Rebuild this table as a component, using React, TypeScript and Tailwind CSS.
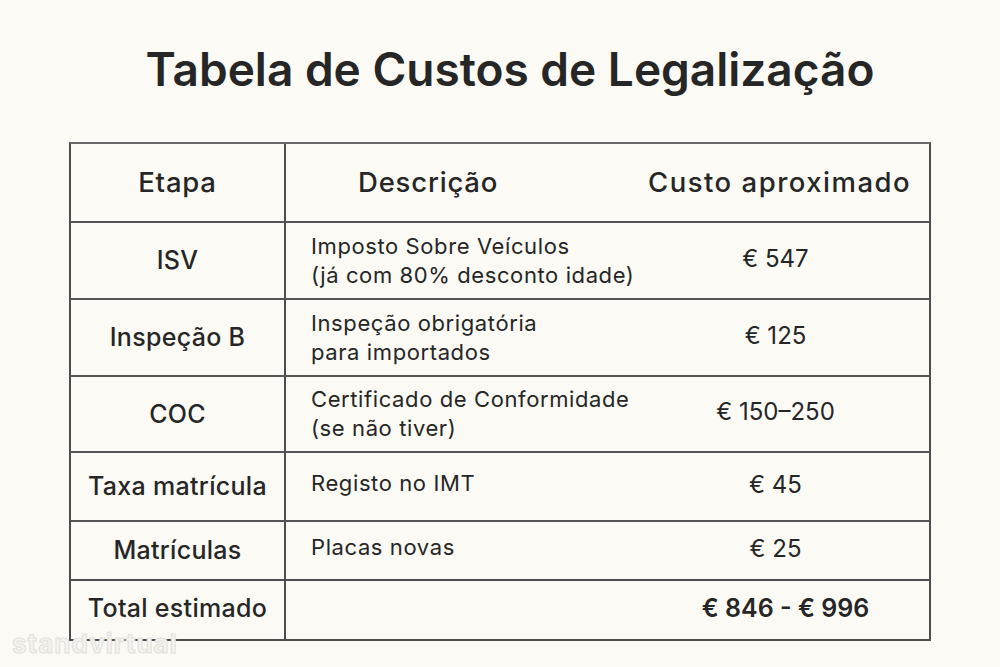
import React from "react";

const rows = [
  { etapa: "ISV", desc: ["Imposto Sobre Veículos", "(já com 80% desconto idade)"], cost: "€ 547", h: "h-[77px]" },
  { etapa: "Inspeção B", desc: ["Inspeção obrigatória", "para importados"], cost: "€ 125", h: "h-[77px]" },
  { etapa: "COC", desc: ["Certificado de Conformidade", "(se não tiver)"], cost: "€ 150–250", h: "h-[76px]" },
  { etapa: "Taxa matrícula", desc: ["Registo no IMT"], cost: "€ 45", h: "h-[69px]" },
  { etapa: "Matrículas", desc: ["Placas novas"], cost: "€ 25", h: "h-[59px]" },
];

export default function App() {
  return (
    <div
      className="relative w-[1000px] h-[667px] bg-[#fbfaf5] text-[#262626] overflow-hidden"
      style={{ fontFamily: "Inter, 'Noto Sans', sans-serif" }}
    >
      <div className="flex justify-center pt-[37px] h-[142px]">
        <h1 className="text-[46px] font-semibold tracking-[0px] leading-[64px] ml-[20px]">
          Tabela de Custos de Legalização
        </h1>
      </div>
      <div className="ml-[69px] w-[862px] border-2 border-[#4d4d4d] border-t-[#6a6a6a]">
        <div className="grid grid-cols-[215px_minmax(0,1fr)_307px] h-[77px] items-center">
          <div className="h-full flex items-center justify-center border-r-2 border-[#4d4d4d] text-[27.5px] tracking-[0.8px] font-medium">
            Etapa
          </div>
          <div className="pl-[72px] text-[27.5px] tracking-[0.8px] font-medium">Descrição</div>
          <div className="text-[27.5px] tracking-[1.5px] font-medium pl-[26px] whitespace-nowrap">Custo aproximado</div>
        </div>
        {rows.map((r) => (
          <div key={r.etapa} className={`grid grid-cols-[215px_minmax(0,1fr)_307px] ${r.h} border-t-2 border-[#555]`}>
            <div className="flex items-center justify-center border-r-2 border-[#4d4d4d] text-[25px] tracking-[0.3px] font-medium pt-[1px]">
              {r.etapa}
            </div>
            <div className="flex flex-col justify-center pl-[25px] text-[22px] tracking-[0.6px] leading-[29px] whitespace-nowrap">
              {r.desc.length === 1 ? (
                <div className="-mt-[6px]">{r.desc[0]}</div>
              ) : (
                r.desc.map((d) => <div key={d}>{d}</div>)
              )}
            </div>
            <div className="flex items-center justify-center text-[24px] -mt-[4px]">{r.cost}</div>
          </div>
        ))}
        <div className="grid grid-cols-[215px_minmax(0,1fr)_307px] h-[60px] border-t-2 border-[#4d4d4d]">
          <div className="flex items-center justify-center border-r-2 border-[#4d4d4d] text-[25px] tracking-[0.3px] font-medium -mt-[2px]">
            Total estimado
          </div>
          <div />
          <div className="flex items-center justify-center text-[25px] font-semibold pl-[20px] -mt-[2px]">
            € 846 - € 996
          </div>
        </div>
      </div>
      <div
        className="absolute left-[12px] top-[624px] text-[26px] font-bold tracking-[1px] text-[#f4f3ee]"
        style={{ WebkitTextStroke: "1px #e2e1dc" }}
      >
        standvirtual
      </div>
    </div>
  );
}
